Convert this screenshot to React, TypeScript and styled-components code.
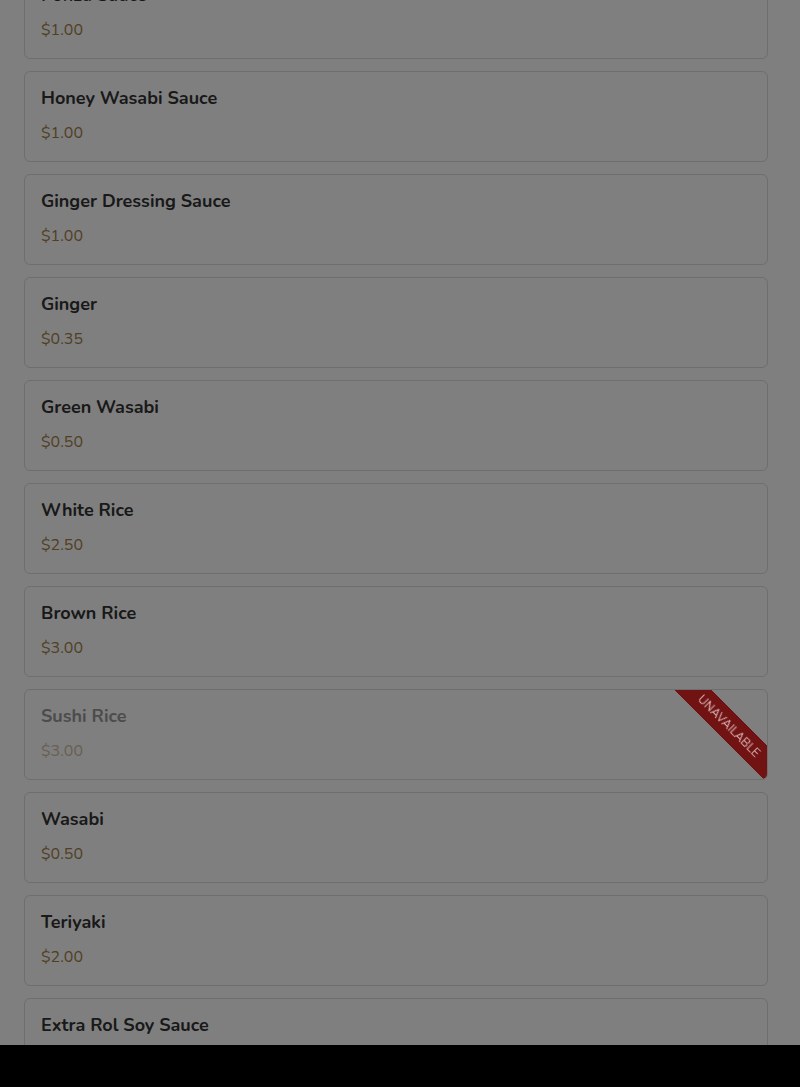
import React from 'react';
import styled, { createGlobalStyle } from 'styled-components';

type Item = { name: string; price: number; unavailable?: boolean };

const items: Item[] = [
  { name: 'Ponzu Sauce', price: 1 },
  { name: 'Honey Wasabi Sauce', price: 1 },
  { name: 'Ginger Dressing Sauce', price: 1 },
  { name: 'Ginger', price: 0.35 },
  { name: 'Green Wasabi', price: 0.5 },
  { name: 'White Rice', price: 2.5 },
  { name: 'Brown Rice', price: 3 },
  { name: 'Sushi Rice', price: 3, unavailable: true },
  { name: 'Wasabi', price: 0.5 },
  { name: 'Teriyaki', price: 2 },
  { name: 'Extra Rol Soy Sauce', price: 0.5 },
];

const GlobalStyle = createGlobalStyle`
  html, body {
    margin: 0;
    padding: 0;
    background: #fff;
    overflow: hidden;
  }
  body {
    font-family: Nunito, Lato, "Noto Sans", sans-serif;
  }
`;

const Page = styled.div`
  height: 1087px;
  overflow: hidden;
`;

const List = styled.div`
  display: flex;
  flex-direction: column;
  gap: 12px;
  padding: 0 32px 0 24px;
  margin-top: -32px;
`;

const Card = styled.div`
  position: relative;
  overflow: hidden;
  background: #fff;
  border: 1px solid #dcdcdc;
  border-radius: 6px;
  padding: 14px 16px 16px;
  box-sizing: border-box;
  height: 91px;
`;

const Content = styled.div<{ $dim?: boolean }>`
  opacity: ${(p) => (p.$dim ? 0.5 : 1)};
`;

const Name = styled.div`
  font-size: 18px;
  line-height: 24px;
  font-weight: 700;
  color: #333;
`;

const Price = styled.div`
  margin-top: 11px;
  font-size: 16px;
  line-height: 24px;
  color: #a27f46;
`;

/* sits above the backdrop, so its colours are the dimmed ones */
const Ribbon = styled.div`
  position: absolute;
  z-index: 2;
  top: 23px;
  right: -42px;
  width: 160px;
  height: 26px;
  background: #721313;
  color: rgba(230, 205, 205, 0.85);
  font-size: 12px;
  text-transform: uppercase;
  display: flex;
  align-items: center;
  justify-content: center;
  transform: rotate(45deg);
`;

const Backdrop = styled.div`
  position: fixed;
  z-index: 1;
  inset: 0;
  background: rgba(0, 0, 0, 0.5);
`;

const BottomBar = styled.div`
  position: fixed;
  z-index: 3;
  left: 0;
  right: 0;
  bottom: 0;
  height: 42px;
  background: #000;
`;

export default function App() {
  return (
    <Page>
      <GlobalStyle />
      <List>
        {items.map((item) => (
          <Card key={item.name}>
            <Content $dim={item.unavailable}>
              <Name>{item.name}</Name>
              <Price>${item.price.toFixed(2)}</Price>
            </Content>
            {item.unavailable && <Ribbon>Unavailable</Ribbon>}
          </Card>
        ))}
      </List>
      <Backdrop />
      <BottomBar />
    </Page>
  );
}
